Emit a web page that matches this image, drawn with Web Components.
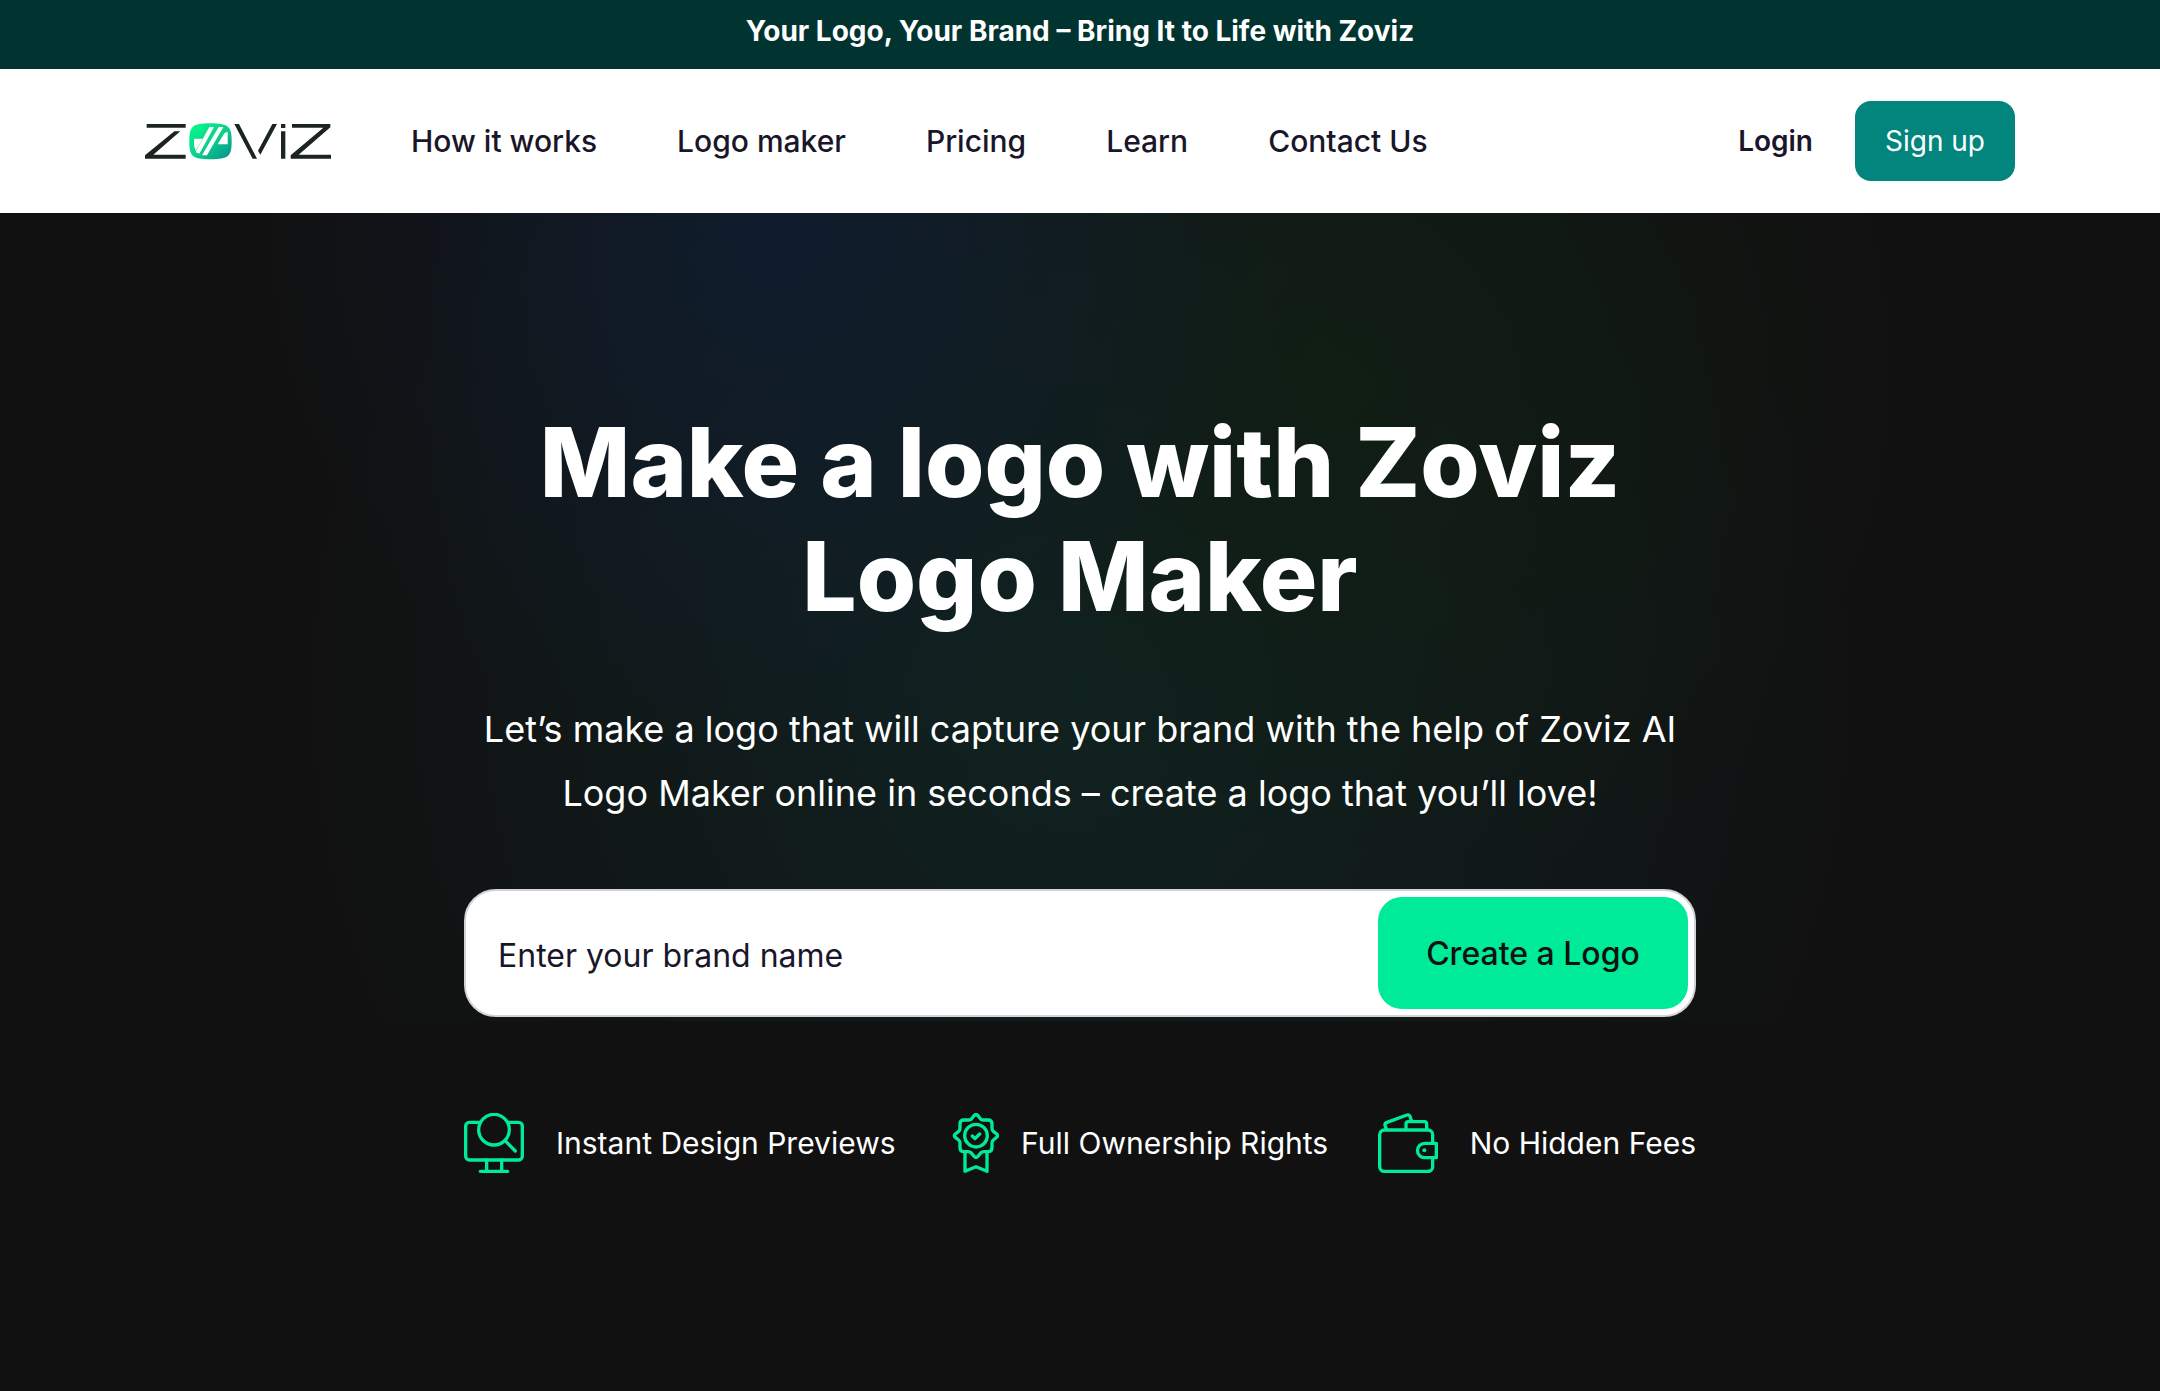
<!DOCTYPE html>
<html lang="en">
<head>
    <meta charset="UTF-8">
    <meta name="viewport" content="width=device-width, initial-scale=1.0">
    <title>Zoviz Logo Maker</title>
    <style>
        body {
            margin: 0;
            min-height: 100vh;
            display: flex;
            flex-direction: column;
            font-family: Inter, "Liberation Sans", sans-serif;
            color: #1a162a;
            background: #111;
        }
        hero-section {
            flex: 1;
        }
    </style>
</head>
<body>
    <promo-banner>Your Logo, Your Brand – Bring It to Life with Zoviz</promo-banner>
    <site-header>
        <nav-link href="#how">How it works</nav-link>
        <nav-link href="#maker">Logo maker</nav-link>
        <nav-link href="#pricing">Pricing</nav-link>
        <nav-link href="#learn">Learn</nav-link>
        <nav-link href="#contact">Contact Us</nav-link>
    </site-header>
    <hero-section>
        <span slot="title">Make a logo with Zoviz<br>Logo Maker</span>
        <span slot="text">Let’s make a logo that will capture your brand with the help of Zoviz AI<br>Logo Maker online in seconds – create a logo that you’ll love!</span>
        <brand-form></brand-form>
        <feature-item slot="features" icon="preview">Instant Design Previews</feature-item>
        <feature-item slot="features" icon="badge">Full Ownership Rights</feature-item>
        <feature-item slot="features" icon="wallet">No Hidden Fees</feature-item>
    </hero-section>

    <script>
        class PromoBanner extends HTMLElement {
            constructor() {
                super();
                this.attachShadow({ mode: 'open' }).innerHTML = `
                    <style>
                        :host {
                            display: block;
                            padding: 14px 24px 21px;
                            background: #013430;
                            color: #fff;
                            font-size: 28px;
                            font-weight: 700;
                            line-height: 34px;
                            text-align: center;
                        }
                    </style>
                    <slot></slot>
                `;
            }
        }

        class SiteLogo extends HTMLElement {
            constructor() {
                super();
                this.attachShadow({ mode: 'open' }).innerHTML = `
                    <style>
                        :host { display: block; }
                        a { display: block; }
                        svg { display: block; width: 186px; height: 37px; }
                    </style>
                    <a href="#" aria-label="Zoviz home">
                        <svg viewBox="45 68 558 111" fill="#1c2423">
                            <defs>
                                <linearGradient id="tile" x1="0" y1="0" x2="1" y2="1">
                                    <stop offset="0.1" stop-color="#05f589"/>
                                    <stop offset="0.5" stop-color="#0bd28b"/>
                                    <stop offset="1" stop-color="#078c8c"/>
                                </linearGradient>
                            </defs>
                            <path d="M50 71H167V82H50ZM133 93H151L70 163H167V175H45V165Z"/>
                            <path d="M178 123C178 78 187 69 241 69S305 78 305 123S296 177 241 177S178 168 178 123Z" fill="url(#tile)"/>
                            <path d="M192 115H218L197 151Q192 142 192 132ZM238 80H252L209 159Q202 160 197 154ZM266 80H280L231 165H216ZM293 94V132H263L283 99Z" fill="#fff"/>
                            <path d="M313 71H327L381 175H368ZM427 71H441L391 163L384 151Z"/>
                            <path d="M453 71H466V83H453ZM453 93H466V175H453Z"/>
                            <path d="M486 71H601V81L506 163H603V175H482V165L580 82H486Z"/>
                        </svg>
                    </a>
                `;
            }
        }

        class NavLink extends HTMLElement {
            constructor() {
                super();
                this.attachShadow({ mode: 'open' });
            }

            connectedCallback() {
                this.shadowRoot.innerHTML = `
                    <style>
                        :host { display: block; }
                        a {
                            color: inherit;
                            font-size: 30px;
                            font-weight: 500;
                            line-height: 40px;
                            text-decoration: none;
                            white-space: nowrap;
                        }
                    </style>
                    <a href="${this.getAttribute('href')}"><slot></slot></a>
                `;
            }
        }

        class SiteHeader extends HTMLElement {
            constructor() {
                super();
                this.attachShadow({ mode: 'open' }).innerHTML = `
                    <style>
                        :host {
                            display: block;
                            padding: 32px 48px;
                            background: #fff;
                        }
                        header {
                            display: flex;
                            align-items: center;
                            gap: 80px;
                            max-width: 1870px;
                            margin: 0 auto;
                        }
                        nav {
                            display: flex;
                            flex: 1;
                            gap: 80px;
                        }
                        .account {
                            display: flex;
                            align-items: center;
                            gap: 42px;
                            font-size: 28px;
                            line-height: 40px;
                        }
                        .login {
                            color: inherit;
                            font-weight: 600;
                            text-decoration: none;
                        }
                        button {
                            width: 160px;
                            height: 80px;
                            padding: 0;
                            border: 0;
                            border-radius: 16px;
                            background: #02857d;
                            color: #fff;
                            font: inherit;
                        }
                    </style>
                    <header>
                        <site-logo></site-logo>
                        <nav><slot></slot></nav>
                        <div class="account">
                            <a class="login" href="#login">Login</a>
                            <button type="button">Sign up</button>
                        </div>
                    </header>
                `;
            }
        }

        class HeroSection extends HTMLElement {
            constructor() {
                super();
                this.attachShadow({ mode: 'open' }).innerHTML = `
                    <style>
                        :host {
                            display: block;
                            padding: 192px 48px 96px;
                            color: #fff;
                            background:
                                radial-gradient(ellipse 24% 560px at 36% 0, rgba(16, 30, 50, 0.85), rgba(16, 30, 50, 0)) no-repeat 0 0 / 100% 808px,
                                radial-gradient(ellipse 26% 560px at 62% 160px, rgba(16, 30, 18, 0.85), rgba(16, 30, 18, 0)) no-repeat 0 0 / 100% 808px,
                                radial-gradient(ellipse 36% 800px at 50% 480px, rgba(16, 38, 37, 0.85), rgba(16, 20, 20, 0)) no-repeat 0 0 / 100% 808px,
                                #111;
                        }
                        .content {
                            max-width: 1232px;
                            margin: 0 auto;
                        }
                        h1 {
                            margin: 0 0 64px;
                            font-size: 96px;
                            font-weight: 800;
                            line-height: 114px;
                            text-align: center;
                        }
                        p {
                            margin: 0 0 64px;
                            font-size: 36px;
                            line-height: 64px;
                            text-align: center;
                        }
                        .features {
                            display: flex;
                            flex-wrap: wrap;
                            justify-content: space-between;
                            gap: 32px;
                            margin-top: 96px;
                        }
                    </style>
                    <div class="content">
                        <h1><slot name="title"></slot></h1>
                        <p><slot name="text"></slot></p>
                        <slot></slot>
                        <div class="features"><slot name="features"></slot></div>
                    </div>
                `;
            }
        }

        class BrandForm extends HTMLElement {
            constructor() {
                super();
                this.attachShadow({ mode: 'open' }).innerHTML = `
                    <style>
                        :host { display: block; }
                        form {
                            display: flex;
                            padding: 6px;
                            border: 2px solid #d3d4da;
                            border-radius: 32px;
                            background: #fff;
                        }
                        input {
                            flex: 1;
                            min-width: 0;
                            padding: 4px 26px 0;
                            border: 0;
                            outline: 0;
                            background: transparent;
                            color: #1a162a;
                            font: 400 32px Inter, "Liberation Sans", sans-serif;
                        }
                        input::placeholder {
                            color: #1a162a;
                            opacity: 1;
                        }
                        button {
                            width: 310px;
                            height: 112px;
                            padding: 0;
                            border: 0;
                            border-radius: 24px;
                            background: #00eb97;
                            color: #111;
                            font: 500 32px Inter, "Liberation Sans", sans-serif;
                        }
                    </style>
                    <form>
                        <input type="text" placeholder="Enter your brand name" aria-label="Enter your brand name">
                        <button type="button">Create a Logo</button>
                    </form>
                `;
            }
        }

        const featureIcons = {
            preview: `
                <svg width="60" height="60" viewBox="75 69 180 180">
                    <path d="M123 97H91a11 11 0 0 0-11 11V199a11 11 0 0 0 11 11H239a11 11 0 0 0 11-11V108a11 11 0 0 0-11-11H207"/>
                    <circle cx="165" cy="119" r="46"/>
                    <path d="M198 152L229 183M143 210V244M188 210V244M124 244H206"/>
                </svg>`,
            badge: `
                <svg width="54" height="60" viewBox="45 69 162 180">
                    <path d="M133 76Q138 71 143 76L151 86Q154 90 160 90H174Q186 90 186 102V115Q186 121 190 124L200 132Q206 137 200 142L190 150Q186 153 186 159V173Q186 185 174 185H162Q156 185 152 189L143 200Q138 205 133 200L124 189Q120 185 114 185H102Q90 185 90 173V159Q90 153 86 150L76 142Q70 137 76 132L86 124Q90 121 90 115V102Q90 90 102 90H116Q122 90 125 86Z"/>
                    <circle cx="138" cy="137" r="34"/>
                    <path d="M127 138L135 146L149 132M105 186V244L138 230L171 244V186"/>
                </svg>`,
            wallet: `
                <svg width="60" height="60" viewBox="51 69 180 180">
                    <path d="M215 158V134a14 14 0 0 0-14-14H70a14 14 0 0 0-14 14V230a14 14 0 0 0 14 14H201a14 14 0 0 0 14-14V206"/>
                    <path d="M226 160H191a21 21 0 0 0 0 43H226Z"/>
                    <path d="M76 117L72 106Q71 100 76 98L138 75Q145 73 147 79L151 91M135 117V102Q135 95 142 95H190Q197 95 197 102V117"/>
                    <circle class="dot" cx="190" cy="181" r="6"/>
                </svg>`
        };

        class FeatureItem extends HTMLElement {
            constructor() {
                super();
                this.attachShadow({ mode: 'open' });
            }

            connectedCallback() {
                const icon = this.getAttribute('icon');

                this.shadowRoot.innerHTML = `
                    <style>
                        :host {
                            display: flex;
                            align-items: center;
                            gap: ${icon === 'badge' ? 22 : 32}px;
                            font-size: 30px;
                            line-height: 40px;
                            white-space: nowrap;
                        }
                        svg {
                            display: block;
                            fill: none;
                            stroke: #00eb97;
                            stroke-width: 10;
                            stroke-linecap: round;
                            stroke-linejoin: round;
                        }
                        .dot {
                            fill: #00eb97;
                            stroke: none;
                        }
                    </style>
                    ${featureIcons[icon]}
                    <slot></slot>
                `;
            }
        }

        customElements.define('promo-banner', PromoBanner);
        customElements.define('site-logo', SiteLogo);
        customElements.define('nav-link', NavLink);
        customElements.define('site-header', SiteHeader);
        customElements.define('hero-section', HeroSection);
        customElements.define('brand-form', BrandForm);
        customElements.define('feature-item', FeatureItem);
    </script>
</body>
</html>
